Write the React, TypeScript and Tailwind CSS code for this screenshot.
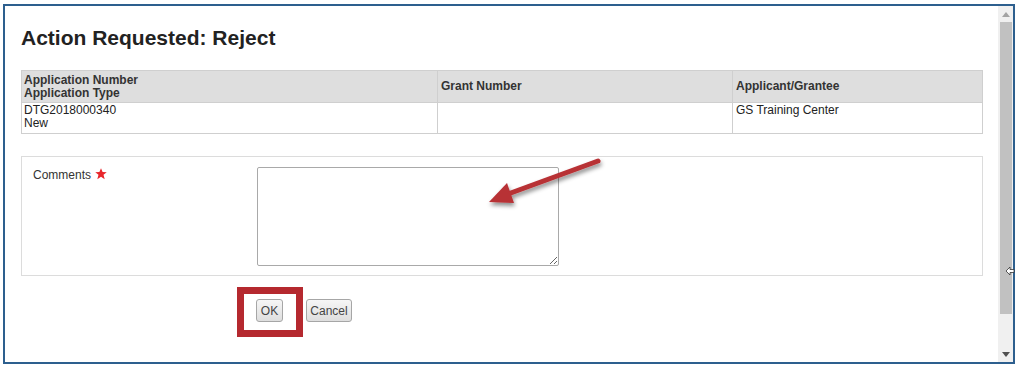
import { useState } from 'react';

// Reject action dialog, as seen in the grants workflow
export default function App() {
  const [comments, setComments] = useState('');

  return (
    <div className="w-[1021px] h-[370px] bg-white pt-[4px] pl-[3px] font-['Liberation_Sans',Arial,sans-serif] text-[#222]">
      <div className="relative w-[1012px] h-[360px] border-2 border-[#2d5f8e] flex">
        {/* Content */}
        <div className="flex-1 pl-[16px] pr-[15px] pt-[20px]">
          <h1 className="text-[21px] leading-[24px] font-bold text-[#222]">Action Requested: Reject</h1>

          {/* Summary table */}
          <table className="mt-[20px] w-[962px] border-collapse text-[12px] leading-[13px]">
            <thead>
              <tr className="bg-[#dedede] h-[32px]">
                <th className="w-[416px] border border-[#cfcfcf] px-[2px] text-left align-middle font-bold text-[#333]">
                  Application Number
                  <br />
                  Application Type
                </th>
                <th className="w-[295px] border border-[#cfcfcf] px-[3px] text-left align-middle font-bold text-[#333]">
                  Grant Number
                </th>
                <th className="border border-[#cfcfcf] px-[3px] text-left align-middle font-bold text-[#333]">
                  Applicant/Grantee
                </th>
              </tr>
            </thead>
            <tbody>
              <tr className="h-[31px]">
                <td className="border border-[#cfcfcf] px-[2px] pt-[1px] align-top">
                  DTG2018000340
                  <br />
                  New
                </td>
                <td className="border border-[#cfcfcf] px-[3px] pt-[1px] align-top"></td>
                <td className="border border-[#cfcfcf] px-[3px] pt-[1px] align-top">GS Training Center</td>
              </tr>
            </tbody>
          </table>

          {/* Comments */}
          <div className="mt-[22px] w-[962px] h-[120px] border border-[#dcdcdc] flex pt-[10px]">
            <div className="w-[235px] pl-[11px] pt-[1px] text-[12px] leading-[14px] text-[#333] flex items-start gap-[4px]">
              <span>Comments</span>
              <svg width="12" height="12" viewBox="0 0 24 24" className="mt-[0px]">
                <path
                  d="M12 0.5 L15.2 8 L23.5 8.3 L17 13.6 L19.4 22.5 L12 17.6 L4.6 22.5 L7 13.6 L0.5 8.3 L8.8 8 Z"
                  fill="#e8262b"
                />
              </svg>
            </div>
            <textarea
              value={comments}
              onChange={(e) => setComments(e.target.value)}
              className="w-[302px] h-[99px] border border-[#a9a9a9] rounded-[2px] bg-white outline-none resize p-1 text-[12px]"
            />
          </div>

          {/* Buttons */}
          <div className="mt-[23px] pl-[235px] flex gap-[23px]">
            <button className="h-[23px] w-[27px] rounded-[3px] border border-[#a6a6a6] bg-gradient-to-b from-[#f6f6f6] to-[#dedede] text-[12px] text-[#444]">
              OK
            </button>
            <button className="h-[23px] w-[46px] rounded-[3px] border border-[#a6a6a6] bg-gradient-to-b from-[#f6f6f6] to-[#dedede] text-[12px] text-[#444]">
              Cancel
            </button>
          </div>
        </div>

        {/* Scrollbar */}
        <div className="w-[16px] h-full bg-[#f0f0f0] flex flex-col items-center">
          <div className="h-[16px] flex items-center justify-center">
            <svg width="8" height="5" viewBox="0 0 8 5">
              <path d="M0 5 L4 0 L8 5 Z" fill="#a3a3a3" />
            </svg>
          </div>
          <div className="w-[12px] h-[292px] bg-[#c1c1c1]" />
          <div className="flex-1" />
          <div className="h-[16px] flex items-center justify-center">
            <svg width="8" height="5" viewBox="0 0 8 5">
              <path d="M0 0 L8 0 L4 5 Z" fill="#505050" />
            </svg>
          </div>
        </div>

        {/* Mouse cursor over the scrollbar */}
        <svg className="absolute left-[1000px] top-[260px]" width="10" height="10" viewBox="0 0 10 10">
          <path d="M1 5 L5 1 L5 3.5 L9 3.5 L9 6.5 L5 6.5 L5 9 Z" fill="white" stroke="#333" strokeWidth="0.8" />
        </svg>

        {/* Annotation: highlight around OK */}
        <div className="absolute left-[232px] top-[281px] w-[66px] h-[50px] border-[7px] border-[#b5292f] pointer-events-none" />

        {/* Annotation: arrow pointing to the textarea */}
        <svg className="absolute left-0 top-0 pointer-events-none" width="1008" height="356" viewBox="0 0 1008 356">
          <defs>
            <filter id="arrowShadow" x="-20%" y="-40%" width="140%" height="180%">
              <feDropShadow dx="1" dy="3" stdDeviation="2" floodColor="#000" floodOpacity="0.45" />
            </filter>
          </defs>
          <g transform="translate(-5 -6)" filter="url(#arrowShadow)">
            <line x1="598" y1="161" x2="508" y2="194" stroke="#b83035" strokeWidth="5" strokeLinecap="round" />
            <path d="M489 202 L507 183 L514 203 Z" fill="#b83035" />
          </g>
        </svg>
      </div>
    </div>
  );
}
